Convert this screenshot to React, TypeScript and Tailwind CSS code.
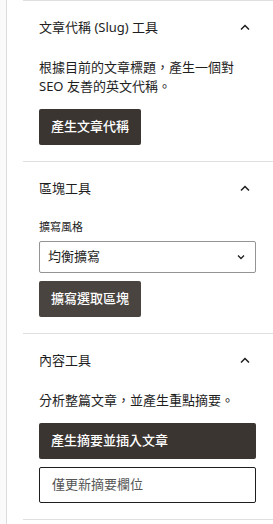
import { useState } from 'react'

const font = { fontFamily: '"Noto Sans", "Noto Sans CJK TC", sans-serif' }

function Chevron({ up }: { up?: boolean }) {
  return (
    <svg width="12" height="8" viewBox="0 0 12 8" fill="none" className={up ? '' : 'rotate-180'}>
      <path d="M2 6.5 L6 2.5 L10 6.5" stroke="#1e1e1e" strokeWidth="1.5" />
    </svg>
  )
}

function PanelHeader({ title }: { title: string }) {
  return (
    <div className="flex items-center justify-between pl-4 pr-[22px] pt-4 pb-[21px]">
      <span className="text-[13px] leading-5 text-[#1e1e1e]">{title}</span>
      <Chevron up />
    </div>
  )
}

export default function App() {
  const [estilo, setEstilo] = useState('均衡擴寫')

  return (
    <div className="flex w-[273px] h-[524px] bg-white overflow-hidden" style={font}>
      {/* franja izquierda */}
      <div className="w-[7px] shrink-0 bg-[#fafafa] border-r border-[#dddddd]" />
      <div className="w-4 shrink-0" />

      <div className="flex-1 flex flex-col">
        {/* SLUG */}
        <section className="border-t border-[#e0e0e0] pb-4">
          <PanelHeader title="文章代稱 (Slug) 工具" />
          <div className="pl-4 pr-[17px]">
            <p className="text-[13px] leading-[19px] text-[#1e1e1e]">
              根據目前的文章標題，產生一個對 SEO 友善的英文代稱。
            </p>
            <button className="mt-[13px] h-9 px-3 rounded-[2px] bg-[#3b3532] text-white text-[13px] font-medium">
              產生文章代稱
            </button>
          </div>
        </section>

        {/* BLOQUE */}
        <section className="border-t border-[#e0e0e0] pb-4">
          <PanelHeader title="區塊工具" />
          <div className="pl-4 pr-[17px]">
            <label className="block text-[11px] leading-4 text-[#1e1e1e]">擴寫風格</label>
            <div className="relative mt-[6px]">
              <select
                value={estilo}
                onChange={e => setEstilo(e.target.value)}
                className="appearance-none w-full h-8 pl-2 pr-6 border border-[#949494] rounded-[2px] bg-white text-[13px] text-[#1e1e1e] outline-none"
              >
                <option>均衡擴寫</option>
                <option>詳細擴寫</option>
                <option>簡潔擴寫</option>
              </select>
              <span className="absolute right-[10px] top-[13px] pointer-events-none">
                <svg width="10" height="6" viewBox="0 0 10 6" fill="none">
                  <path d="M2 1.5 L5 4.5 L8 1.5" stroke="#1e1e1e" strokeWidth="1.3" />
                </svg>
              </span>
            </div>
            <button className="mt-2 h-9 px-3 rounded-[2px] bg-[#4a4440] text-white text-[13px] font-medium">
              擴寫選取區塊
            </button>
          </div>
        </section>

        {/* CONTENIDO */}
        <section className="border-t border-[#e0e0e0] pb-4 border-b">
          <PanelHeader title="內容工具" />
          <div className="pl-4 pr-[17px]">
            <p className="text-[13px] leading-[19px] text-[#1e1e1e]">分析整篇文章，並產生重點摘要。</p>
            <button className="mt-[13px] w-full h-9 px-3 text-left rounded-[2px] bg-[#3b3532] text-white text-[13px] font-medium">
              產生摘要並插入文章
            </button>
            <button className="mt-2 w-full h-9 px-3 text-left rounded-[2px] border border-[#1e1e1e] bg-white text-[#555] text-[13px]">
              僅更新摘要欄位
            </button>
          </div>
        </section>
      </div>
    </div>
  )
}
